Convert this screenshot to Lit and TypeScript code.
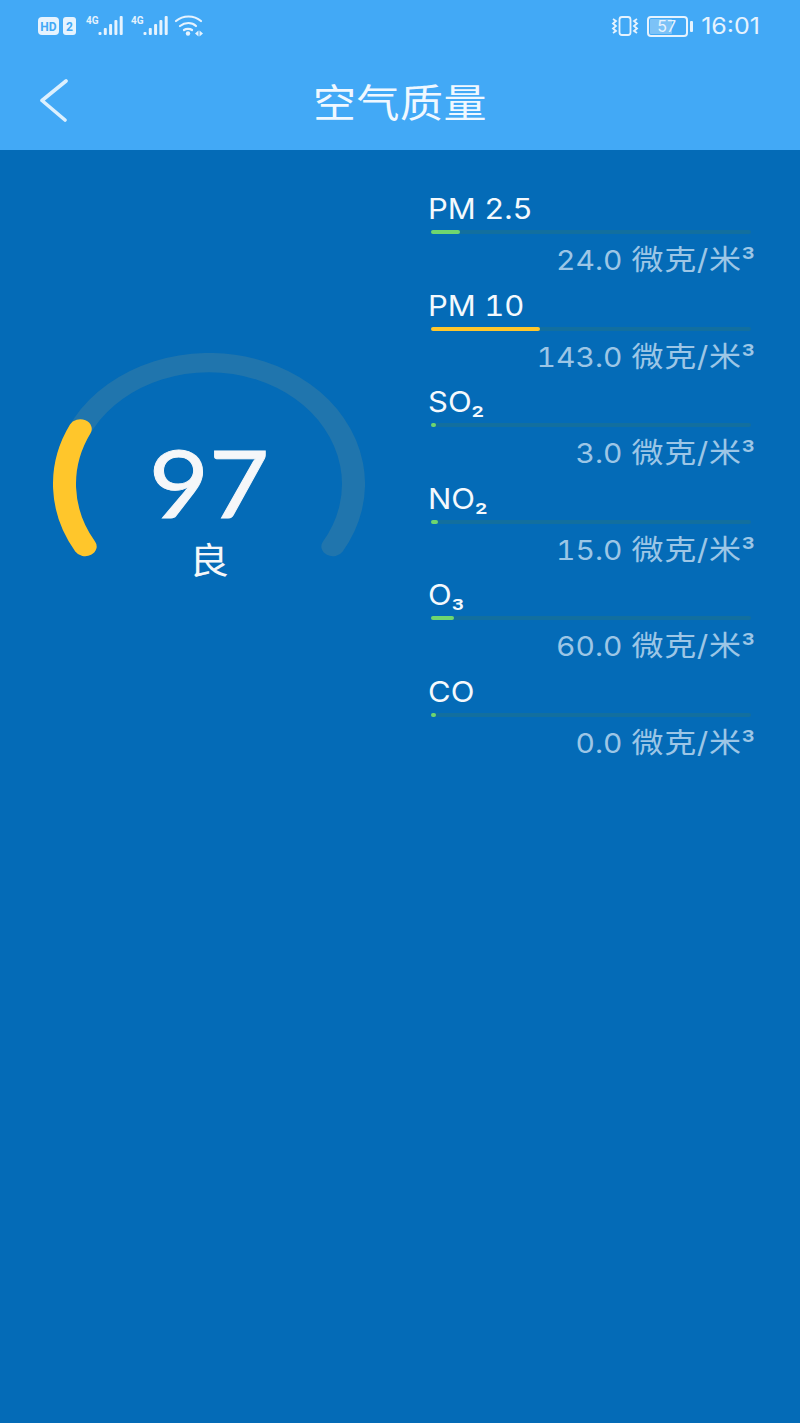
import { html, css, LitElement, svg } from "lit";
import { customElement } from "lit/decorators.js";

interface Pollutant {
  name: string;
  sub?: string;
  value: string;
  width: number;
  color: string;
}

const GREEN = "#6fd66f";
const YELLOW = "#ffc62b";
const ICON = "#e6f3fe";

const POLLUTANTS: Pollutant[] = [
  { name: "PM 2.5", value: "24.0", width: 29, color: GREEN },
  { name: "PM 10", value: "143.0", width: 109, color: YELLOW },
  { name: "SO", sub: "₂", value: "3.0", width: 5, color: GREEN },
  { name: "NO", sub: "₂", value: "15.0", width: 7, color: GREEN },
  { name: "O", sub: "₃", value: "60.0", width: 23, color: GREEN },
  { name: "CO", value: "0.0", width: 5, color: GREEN }
];

const BAR_HEIGHTS = [3, 7, 11, 15, 19];

// point on the gauge circle, angle in degrees clockwise from +x
const point = (deg: number, r: number) => {
  const a = (deg * Math.PI) / 180;
  return `${(156 + r * Math.cos(a)).toFixed(2)} ${(156 + r * Math.sin(a)).toFixed(2)}`;
};

const arc = (from: number, to: number, r: number) =>
  `M${point(from, r)} A${r} ${r} 0 ${to - from > 180 ? 1 : 0} 1 ${point(to, r)}`;

@customElement("app-root")
export class AppRoot extends LitElement {
  renderStatusBar() {
    return html`
      <div class="status">
        <svg class="left-icons" width="170" height="30" viewBox="0 0 170 30">
          <rect x="0" y="6" width="21" height="18" rx="4" fill=${ICON} />
          <text x="10.5" y="20" class="tiny hd" text-anchor="middle">HD</text>
          <rect x="25" y="6" width="13" height="18" rx="3" fill=${ICON} />
          <text x="31.5" y="20" class="tiny hd" text-anchor="middle">2</text>
          ${[48, 93].map(
            (x) => svg`
              <text x=${x} y="13" class="tiny net">4G</text>
              ${BAR_HEIGHTS.map(
                (h, i) => svg`<rect x=${x + 12.5 + i * 5.3} y=${24 - h} width="3" height=${h} rx="1" fill=${ICON} />`
              )}
            `
          )}
          <g fill="none" stroke=${ICON} stroke-width="2.2" stroke-linecap="round">
            <path d="M138 10 C145 4 156 4 163 10" />
            <path d="M142 15 C147 11 154 11 158 15" />
            <path d="M146 19 C148 17.500 152 17.500 154 19" />
          </g>
          <circle cx="150" cy="22.500" r="2.200" fill=${ICON} />
          <path d="M157 22.500l3.500-3v6zM161.500 19.500l3.500 3-3.500 3z" fill=${ICON} />
        </svg>
        <div class="right-icons">
          <svg width="28" height="22" viewBox="0 0 28 22" fill="none" stroke=${ICON} stroke-width="1.800">
            <rect x="8.500" y="2" width="11" height="18" rx="2.500" />
            <path d="M2 4l3 2-3 2.500 3 2.500-3 2.500 3 2.500-3 2" />
            <path d="M26 4l-3 2 3 2.500-3 2.500 3 2.500-3 2.500 3 2" />
          </svg>
          <div class="battery">
            <div class="battery-body">
              <div class="battery-fill"></div>
              <span class="battery-text">57</span>
            </div>
            <div class="battery-tip"></div>
          </div>
          <span class="clock squash">16:01</span>
        </div>
      </div>
    `;
  }

  renderGauge() {
    return html`
      <div class="gauge">
        <svg class="gauge-arc" width="312" height="312" viewBox="0 0 312 312" fill="none" stroke-linecap="round" stroke-width="23">
          <path d=${arc(149, 391, 144.500)} stroke="#2075ad" />
          <path d=${arc(149, 207, 144.500)} stroke=${YELLOW} />
        </svg>
        <div class="score">
          <span class="score-num squash">97</span>
          <span class="score-label squash">良</span>
        </div>
      </div>
    `;
  }

  override render() {
    return html`
      <header>
        ${this.renderStatusBar()}
        <div class="nav">
          <svg class="back" width="30" height="44" viewBox="0 0 30 44" fill="none" stroke="#dcf0fe" stroke-width="3.600" stroke-linecap="round" stroke-linejoin="round">
            <path d="M27 2 L3 21.500 L26 41" />
          </svg>
          <span class="title squash">空气质量</span>
        </div>
      </header>
      <main>
        ${this.renderGauge()}
        <div class="list">
          ${POLLUTANTS.map(
            (p) => html`
              <div class="row">
                <div class="name">
                  <span class="squash">${p.name}${p.sub ? html`<span class="sub">${p.sub}</span>` : null}</span>
                </div>
                <div class="track">
                  <div class="fill" style="width:${p.width}px;background:${p.color}"></div>
                </div>
                <div class="value">
                  <span class="squash"><span class="num">${p.value}</span> <span class="unit">微克/米</span><span class="sup">³</span></span>
                </div>
              </div>
            `
          )}
        </div>
      </main>
    `;
  }

  static styles = css`
    :host {
      display: block;
      width: 800px;
      height: 1423px;
      overflow: hidden;
      background: #046bb7;
      font-family: "Inter", "Noto Sans CJK SC", sans-serif;
    }

    .squash {
      display: inline-block;
      transform: scaleY(0.9);
    }

    header {
      height: 150px;
      background: #42a9f6;
      color: #f0f8ff;
    }

    .status {
      height: 52px;
      padding: 0 38px;
      display: flex;
      align-items: center;
      justify-content: space-between;
    }

    .tiny {
      font-family: "Roboto", sans-serif;
      font-weight: 700;
    }

    .hd {
      font-size: 12px;
      fill: #42a9f6;
    }

    .net {
      font-size: 10px;
      fill: #e6f3fe;
    }

    .right-icons {
      display: flex;
      align-items: center;
      gap: 8px;
      margin-right: 2px;
    }

    .battery {
      display: flex;
      align-items: center;
      gap: 2px;
    }

    .battery-body {
      position: relative;
      width: 35px;
      height: 15px;
      border: 2px solid #e6f3fe;
      border-radius: 4px;
      padding: 1px;
    }

    .battery-fill {
      width: 62%;
      height: 100%;
      border-radius: 1px;
      background: #7cc2f7;
    }

    .battery-text {
      position: absolute;
      left: 8px;
      top: 0;
      font-size: 16px;
      line-height: 17px;
      color: #e6f3fe;
    }

    .battery-tip {
      width: 3px;
      height: 11px;
      border-radius: 1px;
      background: #e6f3fe;
    }

    .clock {
      font-size: 25px;
      line-height: 30px;
      color: #e6f3fe;
    }

    .nav {
      position: relative;
      height: 98px;
      display: flex;
      align-items: center;
      justify-content: center;
    }

    .back {
      position: absolute;
      left: 39px;
      top: 27px;
    }

    .title {
      font-size: 43px;
      line-height: 60px;
      margin-top: 3px;
      letter-spacing: 0.5px;
      color: #f0f8ff;
    }

    main {
      display: flex;
    }

    .gauge {
      position: relative;
      width: 428px;
      height: 500px;
    }

    .gauge-arc {
      position: absolute;
      left: 53px;
      top: 178px;
      transform: scaleY(0.84);
    }

    .score {
      position: absolute;
      left: 53px;
      top: 284px;
      width: 312px;
      display: flex;
      flex-direction: column;
      align-items: center;
      color: #f5f7f9;
    }

    .score-num {
      font-family: "Lato", "Inter", sans-serif;
      font-size: 104px;
      line-height: 96px;
      -webkit-text-stroke: 1px #f5f7f9;
    }

    .score-label {
      font-size: 40px;
      line-height: 48px;
      margin-top: 7px;
    }

    .list {
      width: 327px;
      padding-top: 41px;
    }

    .row {
      height: 96.500px;
    }

    .name {
      height: 39px;
      font-size: 31px;
      line-height: 35px;
      color: #f4f9fd;
      font-variant-numeric: tabular-nums;
    }

    .sub {
      font-family: "Roboto", sans-serif;
      font-size: 34px;
    }

    .track {
      height: 4px;
      margin-left: 3px;
      width: 320px;
      border-radius: 2px;
      background: #126f9f;
    }

    .fill {
      height: 100%;
      border-radius: 2px;
    }

    .value {
      font-size: 32px;
      line-height: 50px;
      text-align: right;
      color: #9cc6e6;
    }

    .num {
      font-size: 30px;
      font-variant-numeric: tabular-nums;
    }

    .unit {
      letter-spacing: 0.7px;
    }

    .sup {
      font-family: "Roboto", sans-serif;
      font-size: 36px;
    }
  `;
}
